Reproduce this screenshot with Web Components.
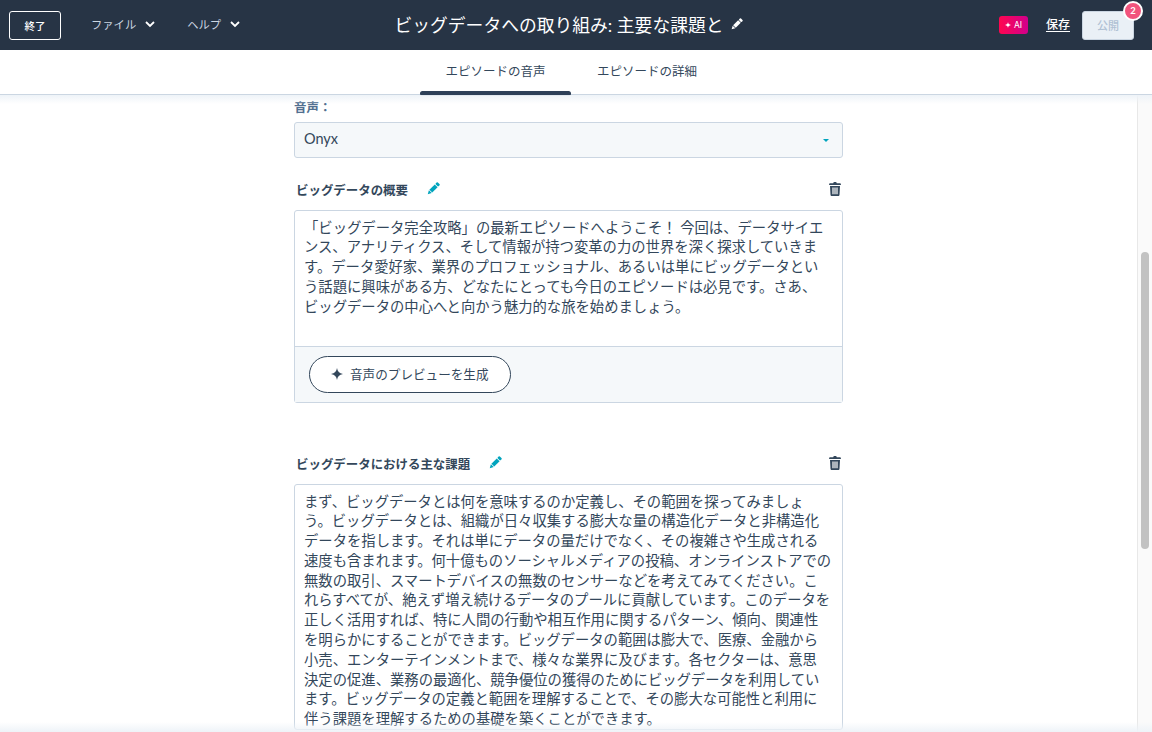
<!DOCTYPE html>
<html lang="ja">
<head>
<meta charset="utf-8">
<title>エピソードの音声</title>
<style>
  html, body { margin: 0; height: 100%; overflow: hidden; }
  body { font-family: "Liberation Sans", "Noto Sans CJK JP", sans-serif; color: #33475b; }
</style>
</head>
<body>
<editor-app></editor-app>

<script>
'use strict';

const FONT = `"Lato", "Noto Sans CJK JP", sans-serif`;

const pencil = (size) => `<svg viewBox="0 0 14 14" width="${size}" height="${size}"><g fill="currentColor" transform="rotate(45 7 7)"><rect x="5" y="-1" width="4" height="2.800" rx=".9"/><rect x="5" y="2.500" width="4" height="7.600"/><path d="M5 10.800h4L7 14.400z"/></g></svg>`;
const CHEVRON = `<svg viewBox="0 0 10 7" width="10" height="7"><path fill="none" stroke="currentColor" stroke-width="1.800" d="M1 1l4 4 4-4"/></svg>`;
const SPARK = `<svg viewBox="0 0 12 12" width="12" height="12"><path fill="currentColor" d="M6 0c.5 3.400 2.200 5.300 6 6-3.800.7-5.500 2.600-6 6-.5-3.400-2.200-5.300-6-6 3.800-.7 5.500-2.600 6-6z"/></svg>`;
const TRASH = `<svg viewBox="0 0 12 14" width="12" height="14"><path fill="currentColor" fill-rule="evenodd" d="M4.200 1.300C4.300.5 4.900 0 5.600 0h.8c.7 0 1.300.5 1.400 1.300h3.200c.5 0 .9.400.9.900v.9H.1v-.9c0-.5.4-.9.900-.9zM1 4h10l-.5 8.700c0 .7-.6 1.300-1.300 1.300H2.800c-.7 0-1.300-.6-1.300-1.300zm2.400 1.600v6.600h1.200V5.600zm2 0v6.600h1.200V5.600zm2 0v6.600h1.200V5.600z"/></svg>`;

class TopBar extends HTMLElement {
  constructor() {
    super();
    this.attachShadow({ mode: 'open' });
    this.shadowRoot.innerHTML = `
      <style>
        :host {
          display: grid;
          grid-template-columns: 1fr auto 1fr;
          align-items: center;
          height: 50px;
          padding: 0 18px 0 9px;
          background: #273445;
          color: #fff;
          font-family: ${FONT};
        }
        .left, .right { display: flex; align-items: center; }
        .exit {
          box-sizing: border-box;
          width: 52px;
          height: 29px;
          display: flex;
          align-items: center;
          justify-content: center;
          border: 1px solid #fff;
          border-radius: 3px;
          font-size: 10.500px;
          font-weight: 500;
        }
        .menu {
          display: flex;
          align-items: center;
          gap: 9px;
          color: #cbd6e2;
          font-size: 11.300px;
          padding-bottom: 3px;
        }
        .menu svg { color: #fff; margin-top: 2px; }
        .file { margin-left: 30px; }
        .help { margin-left: 32px; }
        .title {
          display: flex;
          align-items: center;
          gap: 6px;
          font-size: 17.800px;
          font-weight: 400;
          white-space: nowrap;
          margin-right: 6px;
          padding-bottom: 2px;
        }
        .title svg { margin-top: 1px; }
        .right { justify-content: flex-end; }
        .ai {
          display: flex;
          align-items: center;
          justify-content: center;
          gap: 3px;
          width: 29px;
          height: 18px;
          border-radius: 3px;
          background: linear-gradient(90deg, #ff0650, #d1008c);
          font-family: "Inter", sans-serif;
          font-size: 8.500px;
        }
        .save {
          margin-left: 18px;
          font-size: 12px;
          font-weight: 500;
          text-decoration: underline;
          text-underline-offset: 2px;
          padding-bottom: 3px;
        }
        .publish {
          position: relative;
          box-sizing: border-box;
          width: 52px;
          height: 29px;
          margin-left: 12px;
          display: flex;
          align-items: center;
          justify-content: center;
          padding-bottom: 1px;
          background: #eaf0f6;
          border: 1px solid #cbd6e2;
          border-radius: 3px;
          color: #b0c1d4;
          font-size: 11px;
          font-weight: 500;
        }
        .badge {
          position: absolute;
          top: -11px;
          right: -10px;
          box-sizing: border-box;
          width: 20px;
          height: 20px;
          display: flex;
          align-items: center;
          justify-content: center;
          border: 2px solid #fff;
          border-radius: 50%;
          background: #f2547d;
          color: #fff;
          font-size: 9.500px;
          font-weight: 700;
        }
      </style>
      <div class="left">
        <div class="exit">終了</div>
        <div class="menu file"><span>ファイル</span>${CHEVRON}</div>
        <div class="menu help"><span>ヘルプ</span>${CHEVRON}</div>
      </div>
      <div class="title"><span>ビッグデータへの取り組み: 主要な課題と</span>${pencil(13)}</div>
      <div class="right">
        <div class="ai"><svg viewBox="0 0 12 12" width="6" height="6"><path fill="#fff" d="M6 0c.5 3.400 2.200 5.300 6 6-3.800.7-5.500 2.600-6 6-.5-3.400-2.200-5.300-6-6 3.800-.7 5.500-2.600 6-6z"/></svg>AI</div>
        <div class="save">保存</div>
        <div class="publish">公開<span class="badge">2</span></div>
      </div>
    `;
  }
}

class TabBar extends HTMLElement {
  constructor() {
    super();
    this.attachShadow({ mode: 'open' });
    this.shadowRoot.innerHTML = `
      <style>
        :host {
          display: flex;
          gap: 26px;
          box-sizing: border-box;
          height: 45px;
          padding-left: 420px;
          background: #fff;
          border-bottom: 1px solid #cbd6e2;
          font-family: ${FONT};
          font-size: 12.500px;
          color: #33475b;
        }
        .tab {
          position: relative;
          height: 44px;
          display: flex;
          align-items: center;
          justify-content: center;
          padding-bottom: 3px;
          box-sizing: border-box;
        }
        .tab.on { width: 151px; }
        .tab.on::after {
          content: "";
          position: absolute;
          left: 0;
          right: 0;
          bottom: -2px;
          height: 5px;
          border-radius: 3px;
          background: #2e4058;
        }
      </style>
      <div class="tab on">エピソードの音声</div>
      <div class="tab">エピソードの詳細</div>
    `;
  }
}

class VoiceSelect extends HTMLElement {
  constructor() {
    super();
    this.attachShadow({ mode: 'open' });
    this.shadowRoot.innerHTML = `
      <style>
        :host { display: block; font-family: ${FONT}; }
        label {
          display: block;
          height: 15px;
          padding-top: 1px;
          font-size: 12.500px;
          line-height: 15px;
          font-weight: 700;
          color: #516f90;
          margin-bottom: 7px;
        }
        .box {
          box-sizing: border-box;
          height: 36px;
          display: flex;
          align-items: center;
          justify-content: space-between;
          padding: 0 13px 3px 9px;
          background: #f5f8fa;
          border: 1px solid #cbd6e2;
          border-radius: 3px;
          font-size: 14.500px;
          color: #33475b;
        }
        .caret {
          width: 0;
          height: 0;
          margin-top: 3px;
          border-left: 3px solid transparent;
          border-right: 3px solid transparent;
          border-top: 3px solid #00a4bd;
        }
      </style>
      <label><slot name="label"></slot></label>
      <div class="box"><slot></slot><span class="caret"></span></div>
    `;
  }
}

class ScriptBlock extends HTMLElement {
  constructor() {
    super();
    this.attachShadow({ mode: 'open' });
    this.shadowRoot.innerHTML = `
      <style>
        :host { display: block; font-family: ${FONT}; }
        .head {
          display: flex;
          align-items: center;
          height: 18px;
          padding: 0 2px;
          margin-bottom: 12px;
        }
        .name { font-size: 12.450px; font-weight: 700; color: #33475b; padding-top: 2px; }
        .edit { display: flex; color: #00a4bd; margin-left: 18px; }
        .trash { display: flex; margin-left: auto; color: #33475b; }
        .card {
          border: 1px solid #cbd6e2;
          border-radius: 3px;
          background: #fff;
        }
        .text {
          box-sizing: border-box;
          padding: 6.500px 9px 0;
          font-size: 14.330px;
          line-height: 19.800px;
          color: #33475b;
          white-space: nowrap;
        }
        :host([preview]) .text { height: 135px; }
        .foot {
          display: none;
          height: 56px;
          box-sizing: border-box;
          padding: 9px 14px;
          background: #f5f8fa;
          border-top: 1px solid #cbd6e2;
        }
        :host([preview]) .foot { display: block; }
        .gen {
          box-sizing: border-box;
          width: 202px;
          height: 37px;
          display: flex;
          align-items: center;
          padding: 0 0 3px 21px;
          gap: 7px;
          background: #fff;
          border: 1px solid #33475b;
          border-radius: 19px;
          font-size: 12.600px;
          color: #33475b;
        }
        .gen svg { margin-top: 2px; }
      </style>
      <div class="head">
        <span class="name"><slot name="title"></slot></span>
        <span class="edit">${pencil(14)}</span>
        <span class="trash">${TRASH}</span>
      </div>
      <div class="card">
        <div class="text"><slot></slot></div>
        <div class="foot"><div class="gen">${SPARK}音声のプレビューを生成</div></div>
      </div>
    `;
  }
}

class FakeScrollbar extends HTMLElement {
  constructor() {
    super();
    this.attachShadow({ mode: 'open' });
    this.shadowRoot.innerHTML = `
      <style>
        :host {
          display: block;
          box-sizing: border-box;
          width: 15px;
          flex: none;
          padding: 157px 3px 0 3px;
          background: #fafafa;
          border-left: 1px solid #e8e8e8;
        }
        .thumb { height: 297px; border-radius: 4px; background: #c2c2c2; }
      </style>
      <div class="thumb"></div>
    `;
  }
}

class EditorApp extends HTMLElement {
  constructor() {
    super();
    this.attachShadow({ mode: 'open' });
    this.shadowRoot.innerHTML = `
      <style>
        :host {
          display: flex;
          flex-direction: column;
          height: 100vh;
          overflow: hidden;
          background: #fff;
        }
        .body { flex: 1; min-height: 0; display: flex; position: relative; }
        .scroll { flex: 1; min-width: 0; overflow: hidden; }
        .column {
          width: 549px;
          margin-left: 294px;
          padding-top: 4px;
          display: flex;
          flex-direction: column;
        }
        voice-select { margin-bottom: 22px; }
        script-block[preview] { margin-bottom: 51px; }
        .top-fade, .bottom-fade {
          position: absolute;
          left: 0;
          right: 0;
          pointer-events: none;
        }
        .top-fade { top: 0; height: 9px; background: linear-gradient(#eef3f8, rgba(255,255,255,0)); }
        .bottom-fade { bottom: 0; height: 10px; background: linear-gradient(rgba(238,243,248,0), #eef3f8); }
      </style>
      <top-bar></top-bar>
      <tab-bar></tab-bar>
      <div class="body">
        <div class="scroll">
          <div class="column">
            <voice-select><span slot="label">音声：</span>Onyx</voice-select>
            <script-block preview>
              <span slot="title">ビッグデータの概要</span>
              「ビッグデータ完全攻略」の最新エピソードへようこそ！ 今回は、データサイエ<br>ンス、アナリティクス、そして情報が持つ変革の力の世界を深く探求していきま<br>す。データ愛好家、業界のプロフェッショナル、あるいは単にビッグデータとい<br>う話題に興味がある方、どなたにとっても今日のエピソードは必見です。さあ、<br>ビッグデータの中心へと向かう魅力的な旅を始めましょう。
            </script-block>
            <script-block>
              <span slot="title">ビッグデータにおける主な課題</span>
              まず、ビッグデータとは何を意味するのか定義し、その範囲を探ってみましょ<br>う。ビッグデータとは、組織が日々収集する膨大な量の構造化データと非構造化<br>データを指します。それは単にデータの量だけでなく、その複雑さや生成される<br>速度も含まれます。何十億ものソーシャルメディアの投稿、オンラインストアでの<br>無数の取引、スマートデバイスの無数のセンサーなどを考えてみてください。こ<br>れらすべてが、絶えず増え続けるデータのプールに貢献しています。このデータを<br>正しく活用すれば、特に人間の行動や相互作用に関するパターン、傾向、関連性<br>を明らかにすることができます。ビッグデータの範囲は膨大で、医療、金融から<br>小売、エンターテインメントまで、様々な業界に及びます。各セクターは、意思<br>決定の促進、業務の最適化、競争優位の獲得のためにビッグデータを利用してい<br>ます。ビッグデータの定義と範囲を理解することで、その膨大な可能性と利用に<br>伴う課題を理解するための基礎を築くことができます。
            </script-block>
          </div>
        </div>
        <fake-scrollbar></fake-scrollbar>
        <div class="top-fade"></div>
        <div class="bottom-fade"></div>
      </div>
    `;
  }
}

customElements.define('top-bar', TopBar);
customElements.define('tab-bar', TabBar);
customElements.define('voice-select', VoiceSelect);
customElements.define('script-block', ScriptBlock);
customElements.define('fake-scrollbar', FakeScrollbar);
customElements.define('editor-app', EditorApp);
</script>
</body>
</html>
